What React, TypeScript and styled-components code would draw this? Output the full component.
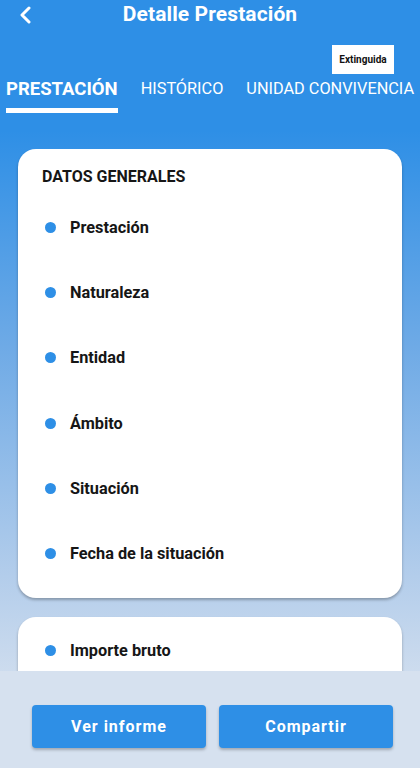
import React from "react";
import styled, { createGlobalStyle } from "styled-components";

const Global = createGlobalStyle`
  html, body { margin: 0; padding: 0; }
  body { font-family: Roboto, "Noto Sans", "Liberation Sans", sans-serif; }
  * { box-sizing: border-box; }
`;

const Page = styled.div`
  width: 420px;
  height: 768px;
  display: flex;
  flex-direction: column;
  overflow: hidden;
  background: linear-gradient(180deg, #2e8fe6 0%, #2e8fe6 17%, #6eaae6 45%, #b3cdeb 75%, #d6e1ef 92%, #d6e1ef 100%);
`;

const Header = styled.div`
  position: relative;
  height: 28px;
  display: flex;
  align-items: center;
  justify-content: center;
`;

const BackButton = styled.button`
  position: absolute;
  left: 16px;
  top: 5px;
  width: 18px;
  height: 20px;
  padding: 0;
  border: none;
  background: transparent;
  display: flex;
  align-items: center;
  justify-content: center;
`;

const Title = styled.h1`
  margin: 0;
  font-size: 21px;
  line-height: 26px;
  font-weight: 700;
  color: #fff;
  letter-spacing: 0.1px;
`;

const TabsArea = styled.div`
  position: relative;
  height: 121px;
  padding-top: 50px;
`;

const Badge = styled.div`
  position: absolute;
  top: 17px;
  right: 26px;
  width: 62px;
  height: 29px;
  background: #fff;
  display: flex;
  align-items: center;
  justify-content: center;
  font-size: 10px;
  font-weight: 700;
  color: #111;
`;

const Tabs = styled.div`
  display: flex;
  align-items: flex-start;
  gap: 23px;
  padding-left: 6px;
  white-space: nowrap;
`;

const Tab = styled.div<{ $active?: boolean }>`
  position: relative;
  font-size: ${(p) => (p.$active ? "18.5px" : "16.3px")};
  line-height: 22px;
  font-weight: ${(p) => (p.$active ? 700 : 400)};
  color: #fff;
  padding-bottom: 13px;
  &::after {
    content: "";
    display: ${(p) => (p.$active ? "block" : "none")};
    position: absolute;
    left: 0;
    right: 0;
    bottom: 0;
    height: 5px;
    background: #fff;
  }
`;

const Scroll = styled.div`
  flex: 1;
  overflow: hidden;
  padding: 0 18px;
  display: flex;
  flex-direction: column;
  gap: 19px;
`;

const Card = styled.div<{ $pt: number; $pb: number }>`
  flex-shrink: 0;
  background: #fff;
  border-radius: 18px;
  box-shadow: 0 2px 3px rgba(0, 0, 0, 0.28);
  padding: ${(p) => p.$pt}px 24px ${(p) => p.$pb}px 24px;
`;

const CardTitle = styled.div`
  font-size: 16px;
  line-height: 20px;
  font-weight: 700;
  color: #161616;
  margin-bottom: 8px;
`;

const Item = styled.div`
  height: 65.2px;
  display: flex;
  align-items: center;
  gap: 14px;
  padding-left: 3px;
`;

const Dot = styled.span`
  width: 11px;
  height: 11px;
  border-radius: 50%;
  background: #2e8fe6;
  flex-shrink: 0;
`;

const ItemText = styled.span`
  font-size: 16.3px;
  font-weight: 700;
  color: #161616;
`;

const BottomBar = styled.div`
  height: 97px;
  flex-shrink: 0;
  background: #d6e1ef;
  display: flex;
  gap: 13px;
  padding: 34px 27px 0 32px;
`;

const ActionButton = styled.button`
  width: 175px;
  height: 43px;
  padding: 0;
  border: none;
  border-radius: 4px;
  background: #2e8fe6;
  display: flex;
  align-items: center;
  justify-content: center;
  box-shadow: 0 2px 3px rgba(0, 0, 0, 0.25);
`;

const ButtonLabel = styled.span`
  color: #fff;
  font-family: Roboto, "Noto Sans", sans-serif;
  font-size: 16px;
  line-height: 20px;
  font-weight: 700;
  letter-spacing: 1px;
`;

const general = ["Prestación", "Naturaleza", "Entidad", "Ámbito", "Situación", "Fecha de la situación"];

export default function App() {
  return (
    <Page>
      <Global />
      <Header>
        <BackButton aria-label="Volver">
          <svg width="14" height="18" viewBox="0 0 14 18">
            <polyline points="11,2 4,9 11,16" fill="none" stroke="#fff" strokeWidth="3" strokeLinecap="round" strokeLinejoin="round" />
          </svg>
        </BackButton>
        <Title>Detalle Prestación</Title>
      </Header>
      <TabsArea>
        <Badge>Extinguida</Badge>
        <Tabs>
          <Tab $active>PRESTACIÓN</Tab>
          <Tab>HISTÓRICO</Tab>
          <Tab>UNIDAD CONVIVENCIA</Tab>
        </Tabs>
      </TabsArea>
      <Scroll>
        <Card $pt={18} $pb={12}>
          <CardTitle>DATOS GENERALES</CardTitle>
          {general.map((g) => (
            <Item key={g}>
              <Dot />
              <ItemText>{g}</ItemText>
            </Item>
          ))}
        </Card>
        <Card $pt={1} $pb={40}>
          <Item>
            <Dot />
            <ItemText>Importe bruto</ItemText>
          </Item>
        </Card>
      </Scroll>
      <BottomBar>
        <ActionButton>
          <ButtonLabel>Ver informe</ButtonLabel>
        </ActionButton>
        <ActionButton>
          <ButtonLabel>Compartir</ButtonLabel>
        </ActionButton>
      </BottomBar>
    </Page>
  );
}
